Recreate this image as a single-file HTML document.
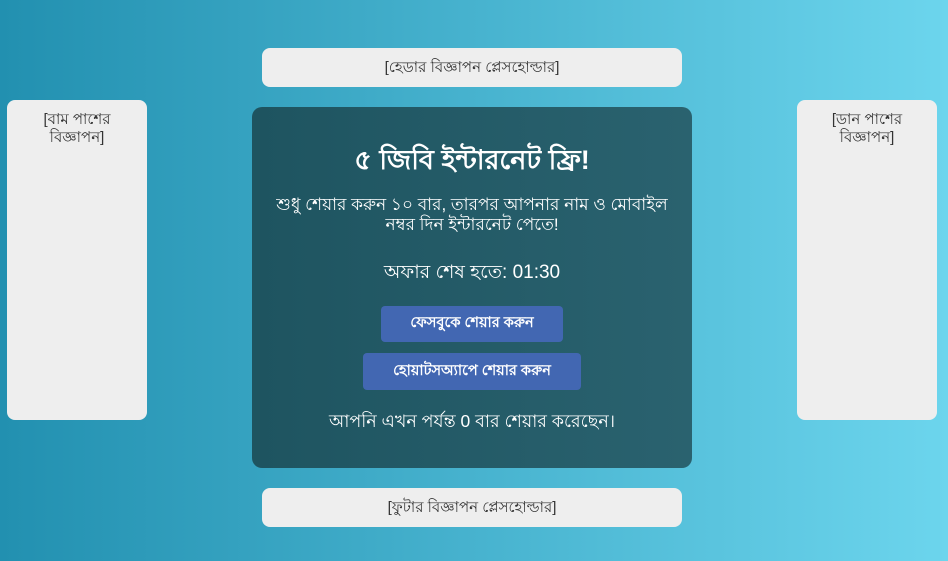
<!DOCTYPE html>
<html><head><meta charset="utf-8"><style>
*{margin:0;padding:0;box-sizing:border-box}
body{width:948px;height:561px;overflow:hidden;background:linear-gradient(90deg,#2290b0,#6cd5ed);font-family:"Liberation Sans","DejaVu Sans",sans-serif;position:relative}
.ad{position:absolute;background:#eeeeee;border-radius:8px;color:#333;font-size:15px;text-align:center}
.top{left:262px;top:48px;width:420px;height:39px;line-height:39px}
.bot{left:262px;top:488px;width:420px;height:39px;line-height:39px}
.side{top:100px;width:140px;height:320px;padding-top:11px;line-height:18px}
.card{position:absolute;left:252px;top:107px;width:440px;height:361px;background:linear-gradient(90deg,#1e5460,#2a626f);border-radius:10px;color:#fff;text-align:center}
h1{position:absolute;top:36px;width:100%;font-size:27px;font-weight:bold;line-height:34px}
.p{position:absolute;top:88px;left:10px;right:10px;font-size:17px;line-height:20px}
.t{position:absolute;top:151px;width:100%;font-size:19px}
.b{position:absolute;background:#4267b2;border-radius:4px;font-size:14.5px;font-weight:bold;display:flex;align-items:center;justify-content:center}
.s{position:absolute;top:302px;width:100%;font-size:17.5px}
</style></head><body>
<div class="ad top">[হেডার বিজ্ঞাপন প্লেসহোল্ডার]</div>
<div class="ad side" style="left:7px">[বাম পাশের<br>বিজ্ঞাপন]</div>
<div class="ad side" style="left:797px">[ডান পাশের<br>বিজ্ঞাপন]</div>
<div class="card">
<h1>৫ জিবি ইন্টারনেট ফ্রি!</h1>
<div class="p">শুধু শেয়ার করুন ১০ বার, তারপর আপনার নাম ও মোবাইল নম্বর দিন ইন্টারনেট পেতে!</div>
<div class="t">অফার শেষ হতে: 01:30</div>
<div class="b" style="left:129px;top:199px;width:182px;height:36px">ফেসবুকে শেয়ার করুন</div>
<div class="b" style="left:111px;top:246px;width:218px;height:37px">হোয়াটসঅ্যাপে শেয়ার করুন</div>
<div class="s">আপনি এখন পর্যন্ত 0 বার শেয়ার করেছেন।</div>
</div>
<div class="ad bot">[ফুটার বিজ্ঞাপন প্লেসহোল্ডার]</div>
</body></html>
